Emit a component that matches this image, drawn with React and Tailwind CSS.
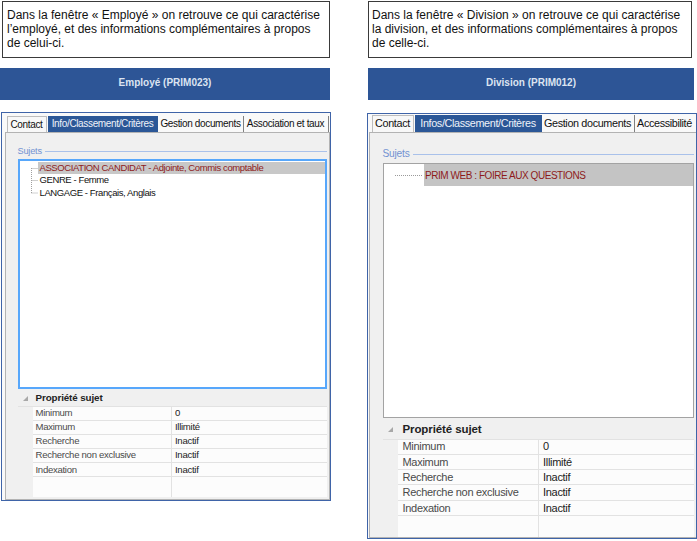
const rows = [
  ["Minimum", "0"],
  ["Maximum", "Illimité"],
  ["Recherche", "Inactif"],
  ["Recherche non exclusive", "Inactif"],
  ["Indexation", "Inactif"],
];

function Tri() {
  return (
    <svg width="5" height="5" viewBox="0 0 5 5">
      <polygon points="5,0 5,5 0,5" fill="#a8a8a8" />
    </svg>
  );
}

function PropGrid({ box, head, row, gutter, label, text, headText, labelPad, valuePad }) {
  return (
    <div className={`flex flex-col bg-[#f0f0f0] ${box}`}>
      <div className={`flex items-center shrink-0 border-b border-[#e2e2e2] ${head}`}>
        <div className={`${gutter} flex justify-center`}>
          <Tri />
        </div>
        <span className={`font-bold text-[#222] ${headText} ${labelPad}`}>Propriété sujet</span>
      </div>
      {rows.map(([k, v]) => (
        <div key={k} className={`flex shrink-0 ${row}`}>
          <div className={gutter} />
          <div className={`${label} ${labelPad} ${text} bg-[#fcfcfc] border-b-[1.5px] border-r border-[#e2e2e2] flex items-center text-[#4a4a4a] whitespace-nowrap`}>
            {k}
          </div>
          <div className={`flex-1 ${valuePad} ${text} bg-[#fcfcfc] border-b-[1.5px] border-[#e2e2e2] flex items-center text-[#222]`}>
            {v}
          </div>
        </div>
      ))}
      <div className="flex flex-1">
        <div className={gutter} />
        <div className={`${label} bg-[#fcfcfc] border-r border-[#e2e2e2]`} />
        <div className="flex-1 bg-[#fcfcfc]" />
      </div>
    </div>
  );
}

function EmployeColumn() {
  return (
    <div className="w-[333px] shrink-0 flex flex-col">
      <div className="mt-[1px] ml-[2px] w-[328px] h-[57px] border border-[#3a3a3a] pl-[4px] pt-[6px] text-[12px] leading-[14px] text-[#111] whitespace-nowrap">
        Dans la fenêtre « Employé » on retrouve ce qui caractérise
        <br />
        l’employé, et des informations complémentaires à propos
        <br />
        de celui-ci.
      </div>

      <div className="mt-[10px] w-[330px] h-[32px] bg-[#2d5596] flex items-center justify-center pb-[3px] text-[10px] font-bold text-[#dce4f1]">
        Employé (PRIM023)
      </div>

      <div className="mt-[12px] ml-[1px] w-[330px] h-[389px] border-[1.5px] border-[#3f64a8] bg-[#f9f9f9] flex flex-col">
        {/* onglets */}
        <div className="h-[18.5px] shrink-0 flex items-end pl-[4.5px] text-[10px] tracking-[-0.35px] text-[#111]">
          <div className="w-[40px] h-[16px] border border-b-0 border-[#bdbdbd] bg-[#f8f8f8] flex items-center justify-center">
            Contact
          </div>
          <div className="ml-[1px] w-[110px] h-[16px] bg-[#2b5797] text-[#eef2f9] flex items-center justify-center whitespace-nowrap">
            Info/Classement/Critères
          </div>
          <div className="ml-[1px] w-[85px] h-[16px] border-r-[1.5px] border-[#808080] flex items-center justify-center whitespace-nowrap">
            Gestion documents
          </div>
          <div className="w-[85px] h-[16px] border-r-[1.5px] border-[#808080] flex items-center justify-center whitespace-nowrap">
            Association et taux
          </div>
        </div>

        {/* page */}
        <div className="flex-1 ml-[2.5px] border border-[#b3b3b3] bg-[#f0f0f0] pl-[12px] flex flex-col">
          <div className="mt-[14px] h-[10px] w-[309px] flex items-center">
            <span className="text-[9.2px] tracking-[-0.2px] text-[#7292d2] leading-none">Sujets</span>
            <div className="ml-[3px] flex-1 h-px bg-[#a9c1ea]" />
          </div>

          <div className="mt-[2px] w-[309px] h-[230px] border-2 border-[#57a7fb] bg-white pt-[1px] flex">
            <svg width="18" height="38" viewBox="0 0 18 38" className="shrink-0">
              <g stroke="#a0a0a0" strokeWidth="1" strokeDasharray="1 1">
                <line x1="11.5" y1="6" x2="11.5" y2="31" />
                <line x1="11.5" y1="6.5" x2="18" y2="6.5" />
                <line x1="11.5" y1="18.5" x2="18" y2="18.5" />
                <line x1="11.5" y1="31" x2="18" y2="31" />
              </g>
            </svg>
            <div className="flex-1 flex flex-col text-[9.5px] tracking-[-0.4px] text-[#111]">
              <div className="h-[12.5px] flex items-center">
                <div className="w-full h-[11.5px] bg-[#c8c8c8] pl-[2px] flex items-center text-[#8e1b1b] whitespace-nowrap">
                  ASSOCIATION CANDIDAT - Adjointe, Commis comptable
                </div>
              </div>
              <div className="h-[12.5px] pl-[2px] flex items-center">GENRE - Femme</div>
              <div className="h-[12.5px] pl-[2px] flex items-center">LANGAGE - Français, Anglais</div>
            </div>
          </div>

          <div className="mt-[3px]">
            <PropGrid
              box="w-[309px] h-[105px]"
              head="h-[15px]"
              row="h-[14.2px]"
              gutter="w-[15px] shrink-0"
              label="w-[139px] shrink-0"
              text="text-[9.6px] tracking-[-0.3px]"
              headText="text-[9.8px] tracking-[-0.1px]"
              labelPad="pl-[3px]"
              valuePad="pl-[3.5px]"
            />
          </div>
        </div>
      </div>
    </div>
  );
}

function DivisionColumn() {
  return (
    <div className="ml-[33px] w-[331px] shrink-0 flex flex-col">
      <div className="mt-[1px] ml-[2px] w-[324px] h-[57px] border border-[#3a3a3a] pl-[3px] pt-[6px] text-[12px] leading-[14px] text-[#111] whitespace-nowrap">
        Dans la fenêtre « Division » on retrouve ce qui caractérise
        <br />
        la division, et des informations complémentaires à propos
        <br />
        de celle-ci.
      </div>

      <div className="mt-[10px] ml-[2px] w-[326px] h-[32px] bg-[#2d5596] flex items-center justify-center pb-[3px] text-[10px] font-bold text-[#dce4f1]">
        Division (PRIM012)
      </div>

      <div className="mt-[13px] ml-[1px] w-[330px] h-[426px] border-[1.5px] border-[#3f64a8] bg-[#f9f9f9] flex flex-col">
        {/* onglets */}
        <div className="h-[17.5px] shrink-0 flex items-end pl-[3.5px] text-[10.8px] tracking-[-0.35px] text-[#111]">
          <div className="w-[42px] h-[17px] border border-b-0 border-[#bdbdbd] bg-[#f8f8f8] flex items-center justify-center">
            Contact
          </div>
          <div className="ml-[1px] w-[127px] h-[17px] bg-[#2b5797] text-[#eef2f9] flex items-center justify-center whitespace-nowrap">
            Infos/Classement/Critères
          </div>
          <div className="w-[93px] h-[17px] border-r-[1.5px] border-[#808080] flex items-center justify-center whitespace-nowrap">
            Gestion documents
          </div>
          <div className="w-[60px] h-[17px] flex items-center justify-center whitespace-nowrap">
            Accessibilité
          </div>
        </div>

        {/* page */}
        <div className="flex-1 ml-[0.5px] border border-r-0 border-[#b3b3b3] bg-[#f0f0f0] pl-[13px] flex flex-col">
          <div className="mt-[17px] h-[10px] w-[311px] flex items-center">
            <span className="text-[10.2px] tracking-[-0.2px] text-[#7292d2] leading-none">Sujets</span>
            <div className="ml-[3px] flex-1 h-px bg-[#a9c1ea]" />
          </div>

          <div className="mt-[3px] w-[311px] h-[255px] border-[1.5px] border-[#a3a3a3] bg-white pt-[0.5px]">
            <div className="h-[22px] flex items-center">
              <div className="ml-[11.5px] w-[27px] border-t border-dotted border-[#9a9a9a]" />
              <div className="ml-[2px] flex-1 h-[22px] bg-[#c4c4c4] pl-[1px] flex items-center text-[10px] tracking-[-0.45px] text-[#8e1b1b] whitespace-nowrap">
                PRIM WEB : FOIRE AUX QUESTIONS
              </div>
            </div>
          </div>

          <div className="mt-[3px]">
            <PropGrid
              box="w-[311px] h-[116px]"
              head="h-[19px]"
              row="h-[15.3px]"
              gutter="w-[15px] shrink-0"
              label="w-[141px] shrink-0"
              text="text-[11px] tracking-[-0.3px]"
              headText="text-[11.5px] tracking-[-0.1px]"
              labelPad="pl-[5px]"
              valuePad="pl-[4.5px]"
            />
          </div>
        </div>
      </div>
    </div>
  );
}

export default function App() {
  return (
    <div className="w-[697px] h-[541px] bg-white overflow-hidden flex font-['Liberation_Sans',Arial,sans-serif]">
      <EmployeColumn />
      <DivisionColumn />
    </div>
  );
}
